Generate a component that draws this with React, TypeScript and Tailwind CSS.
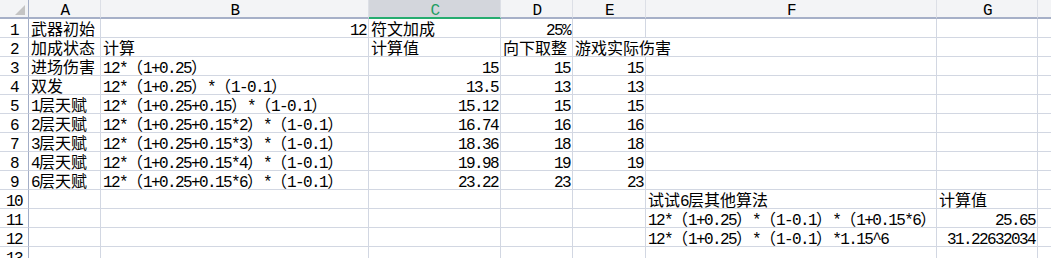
const cols = [
	{ key: 'A', w: 'w-[72px]' },
	{ key: 'B', w: 'w-[268px]' },
	{ key: 'C', w: 'w-[132px]' },
	{ key: 'D', w: 'w-[72px]' },
	{ key: 'E', w: 'w-[73px]' },
	{ key: 'F', w: 'w-[291px]' },
	{ key: 'G', w: 'w-[101px]' },
]

const rows: string[][] = [
	['武器初始', '12', '符文加成', '25%', '', '', ''],
	['加成状态', '计算', '计算值', '向下取整', '游戏实际伤害', '', ''],
	['进场伤害', '12*（1+0.25）', '15', '15', '15', '', ''],
	['双发', '12*（1+0.25）*（1-0.1）', '13.5', '13', '13', '', ''],
	['1层天赋', '12*（1+0.25+0.15）*（1-0.1）', '15.12', '15', '15', '', ''],
	['2层天赋', '12*（1+0.25+0.15*2）*（1-0.1）', '16.74', '16', '16', '', ''],
	['3层天赋', '12*（1+0.25+0.15*3）*（1-0.1）', '18.36', '18', '18', '', ''],
	['4层天赋', '12*（1+0.25+0.15*4）*（1-0.1）', '19.98', '19', '19', '', ''],
	['6层天赋', '12*（1+0.25+0.15*6）*（1-0.1）', '23.22', '23', '23', '', ''],
	['', '', '', '', '', '试试6层其他算法', '计算值'],
	['', '', '', '', '', '12*（1+0.25）*（1-0.1）*（1+0.15*6）', '25.65'],
	['', '', '', '', '', '12*（1+0.25）*（1-0.1）*1.15^6', '31.22632034'],
	['', '', '', '', '', '', ''],
]

// ascii goes in a narrow mono run, the rest in the CJK face
function Txt({ s }: { s: string }) {
	const parts = s.match(/[\x20-\x7e]+|[^\x20-\x7e]+/g) ?? []
	return (
		<>
			{parts.map((p, i) =>
				/^[\x20-\x7e]/.test(p) ? (
					<span key={i} className="font-['Liberation_Mono',monospace] text-[16px] tracking-[-1.6px]">
						{p}
					</span>
				) : (
					<span key={i}>{p}</span>
				)
			)}
		</>
	)
}

function Corner() {
	return (
		<div className="w-[29px] h-[19px] shrink-0 bg-[#f3f4f6] border-r border-r-[#a3aec7] border-b-2 border-b-[#a6b0c8] relative">
			<svg width="29" height="17" className="absolute left-0 top-0">
				<polygon points="25,5 25,15 15,15" fill="#c4c4c4" />
			</svg>
		</div>
	)
}

export default function App() {
	return (
		<div className="w-[1051px] h-[258px] overflow-hidden bg-white text-black font-['Noto_Sans_CJK_SC',sans-serif] text-[16px] leading-[18px]">
			<div className="flex">
				<Corner />
				{cols.map((c) => (
					<div
						key={c.key}
						className={
							c.key === 'C'
								? `${c.w} h-[19px] shrink-0 bg-[#d3d6dc] border-r border-r-[#dcdfe6] border-b-2 border-b-[#25ac6f] text-center text-[#1f9e63] leading-[17px]`
								: `${c.w} h-[19px] shrink-0 bg-[#f3f4f6] border-r border-r-[#dcdfe6] border-b-2 border-b-[#a6b0c8] text-center leading-[17px]`
						}
					>
						<Txt s={c.key} />
					</div>
				))}
				<div className="flex-1 h-[19px] bg-[#f3f4f6] border-b-2 border-b-[#a6b0c8]" />
			</div>
			{rows.map((r, ri) => (
				<div key={ri} className="flex">
					<div className="w-[29px] h-[19px] shrink-0 border-r border-r-[#a3aec7] border-b border-b-[#d2d7e2] text-center">
						<Txt s={String(ri + 1)} />
					</div>
					{r.map((v, ci) => {
						const num = /^[\d.%]+$/.test(v)
						const open = ri === 1 && ci === 4
						return (
							<div
								key={ci}
								className={`${cols[ci].w} h-[19px] shrink-0 border-b border-b-[#d2d7e2] border-r ${
									open ? 'border-r-white' : 'border-r-[#d2d7e2]'
								} px-[2px] whitespace-nowrap ${num ? 'text-right' : 'text-left'}`}
							>
								<Txt s={v} />
							</div>
						)
					})}
					<div className="flex-1 h-[19px] border-b border-b-[#d2d7e2]" />
				</div>
			))}
		</div>
	)
}
